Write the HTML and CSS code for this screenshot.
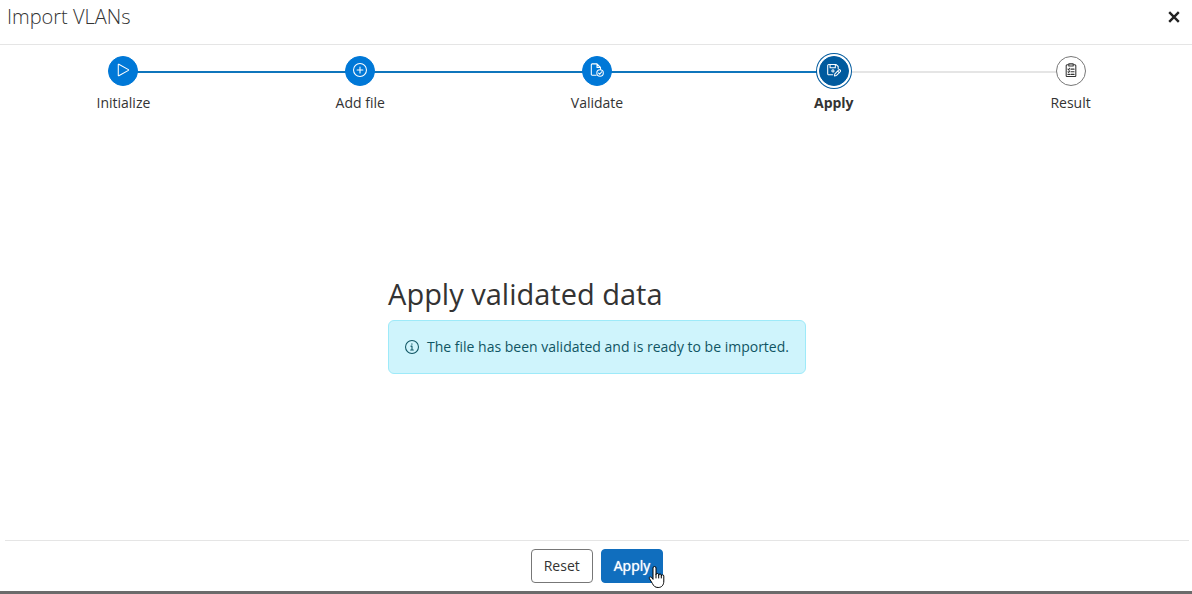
FILE: index.html
```html
<!DOCTYPE html>
<html lang="en">

<head>
    <meta charset="UTF-8">
    <meta name="viewport" content="width=device-width, initial-scale=1.0">
    <title>Import VLANs</title>
    <link rel="stylesheet" href="styles.css">
</head>

<body>
    <div class="dialog" role="dialog" aria-labelledby="dialogTitle">
        <!-- Header -->
        <header class="dialog-header">
            <h1 class="dialog-title" id="dialogTitle">Import VLANs</h1>
            <button class="btn-close" type="button" aria-label="Close">
                <svg viewBox="0 0 10 10"><path d="M1 1l8 8M9 1l-8 8"/></svg>
            </button>
        </header>

        <!-- Steps -->
        <ol class="steps">
            <li class="step done">
                <span class="step-icon">
                    <svg viewBox="0 0 16 16"><path d="M2.600 1.700v12.600a.4.4 0 0 0 .6.3l11-6.200a.5.5 0 0 0 0-.8L3.200 1.400a.4.4 0 0 0-.6.3z"/></svg>
                </span>
                <span class="step-label">Initialize</span>
            </li>
            <li class="step done">
                <span class="step-icon">
                    <svg viewBox="0 0 16 16"><circle cx="8" cy="8" r="7.400"/><path d="M8 4.700v6.600M4.700 8h6.600"/></svg>
                </span>
                <span class="step-label">Add file</span>
            </li>
            <li class="step done">
                <span class="step-icon">
                    <svg viewBox="0 0 16 16"><path d="M7 14H2.500a1 1 0 0 1-1-1V2a1 1 0 0 1 1-1H8l4 4v2M8 1v4h4"/><circle cx="11.500" cy="11.500" r="3.700"/><path d="M9.800 11.600l1.300 1.300 2.200-2.700"/></svg>
                </span>
                <span class="step-label">Validate</span>
            </li>
            <li class="step active" aria-current="step">
                <span class="step-icon">
                    <svg viewBox="0 0 16 16"><path d="M6.500 13.500H2a1.200 1.200 0 0 1-1.200-1.200V3A1.200 1.200 0 0 1 2 1.800h8.500L12.800 4v2.500M3.500 2v3.500h6V2"/><circle cx="6.800" cy="9" r="1.200"/><path d="M8.500 14.700l.5-2.400 4.200-4.200a1.200 1.200 0 0 1 1.900 1.900L10.900 14.200zM12.200 9.200l1.900 1.900"/></svg>
                </span>
                <span class="step-label">Apply</span>
            </li>
            <li class="step">
                <span class="step-icon">
                    <svg viewBox="0 0 16 16"><path d="M5 2H3.500a1 1 0 0 0-1 1v11.500a1 1 0 0 0 1 1h9a1 1 0 0 0 1-1V3a1 1 0 0 0-1-1H11"/><path d="M5.500 1h5v2.500h-5zM4.500 7l.8.8L6.500 6M8 7h3.500M4.500 10l.8.8L6.500 9M8 10h3.500M4.500 13h2M8 13h3.500"/></svg>
                </span>
                <span class="step-label">Result</span>
            </li>
        </ol>

        <!-- Content -->
        <main class="dialog-body">
            <section class="panel">
                <h2 class="panel-title">Apply validated data</h2>
                <div class="alert" role="status">
                    <svg class="alert-icon" viewBox="0 0 16 16"><circle cx="8" cy="8" r="7.400"/><path d="M6.800 7H8v4.300M6.500 11.500h3"/><path d="M7.900 4.200v.6"/></svg>
                    <span>The file has been validated and is ready to be imported.</span>
                </div>
            </section>
        </main>

        <!-- Actions -->
        <footer class="dialog-footer">
            <button class="btn btn-outline" type="button">Reset</button>
            <div class="btn-wrap">
                <button class="btn btn-primary" type="button">Apply</button>
                <svg class="pointer" viewBox="0 0 17 24"><path d="M5 14V3a1.500 1.500 0 0 1 3 0v6.500a1.400 1.400 0 0 1 2.700 0v.8a1.300 1.300 0 0 1 2.600 0v.8a1.200 1.200 0 0 1 2.500 0V16c0 4-2 6.500-5.600 6.500-3.200 0-4.500-1.500-5.800-4l-3-5c-.7-1.300.9-2.300 2-1.200zM8 9.500V13M10.700 10.300V13M13.300 11V13"/></svg>
            </div>
        </footer>
    </div>
</body>

</html>
```
FILE: styles.css
```css
/* General */
* {
    box-sizing: border-box;
}

body {
    margin: 0;
    font-family: 'Open Sans', 'Noto Sans', sans-serif;
    font-size: 14px;
    line-height: 20px;
    color: #333;
    background: #fff;
}

svg {
    display: block;
    fill: none;
    stroke: currentColor;
    stroke-linecap: round;
    stroke-linejoin: round;
}

.dialog {
    display: flex;
    flex-direction: column;
    min-height: 100vh;
    border-bottom: 3px solid #6b6b6b;
}

/* Header */
.dialog-header {
    display: flex;
    justify-content: space-between;
    align-items: center;
    padding: 4px 12px 14px 7px;
    border-bottom: 1px solid #e5e5e5;
}

.dialog-title {
    margin: 0;
    font-size: 20px;
    font-weight: 300;
    line-height: 26px;
}

.btn-close {
    padding: 0;
    border: none;
    background: none;
    color: #222;
    cursor: pointer;
}

.btn-close svg {
    width: 12px;
    height: 12px;
    stroke-width: 2;
    stroke-linecap: butt;
}

/* Steps */
.steps {
    display: flex;
    margin: 0;
    padding: 11px 3px 0 5px;
    list-style: none;
}

.step {
    position: relative;
    flex: 1;
    display: flex;
    flex-direction: column;
    align-items: center;
    gap: 7px;
}

/* line back to the previous step */
.step + .step::before {
    content: "";
    position: absolute;
    top: 15px;
    right: 50%;
    width: 100%;
    height: 2px;
    background: #e5e5e5;
}

.step + .step.done::before,
.step + .step.active::before {
    background: #0f75bc;
}

.step-icon {
    position: relative;
    z-index: 1;
    display: flex;
    justify-content: center;
    align-items: center;
    width: 30px;
    height: 30px;
    padding-bottom: 2px;
    border: 1px solid #777;
    border-radius: 50%;
    background: #fff;
}

.step-icon svg {
    width: 14px;
    height: 14px;
    stroke-width: 1.2;
}

.done .step-icon {
    border-color: #0078d7;
    background: #0078d7;
    color: #fff;
}

.active .step-icon {
    border-color: #005a9e;
    background: #005a9e;
    color: #fff;
    box-shadow: 0 0 0 2px #fff, 0 0 0 3px #005a9e;
}

.active .step-label {
    font-weight: 700;
}

/* Content */
.dialog-body {
    flex: 1;
    display: flex;
    justify-content: center;
    align-items: center;
    padding: 0 3px 3px 5px;
}

.panel-title {
    margin: 0 0 9px;
    font-size: 29px;
    font-weight: 400;
    line-height: 34px;
}

.alert {
    display: flex;
    align-items: center;
    gap: 8px;
    padding: 16px;
    border: 1px solid #9eeaf9;
    border-radius: 6px;
    background: #cff4fc;
    color: #0f5563;
}

.alert-icon {
    width: 14px;
    height: 14px;
    stroke-width: 1.2;
}

/* Actions */
.dialog-footer {
    display: flex;
    justify-content: center;
    gap: 8px;
    margin: 0 3px 0 5px;
    padding: 8px;
    border-top: 1px solid #e5e5e5;
}

.btn {
    padding: 6px 12px;
    border: 1px solid #777;
    border-radius: 4px;
    background: #fff;
    color: #333;
    font-family: inherit;
    font-size: 14px;
    line-height: 20px;
    cursor: pointer;
}

.btn-primary {
    border-color: #106ebe;
    background: #106ebe;
    color: #fff;
    text-shadow: 0 0 1px #fff;
}

.btn-wrap {
    position: relative;
}

.pointer {
    position: absolute;
    left: 47px;
    top: 16px;
    width: 17px;
    height: 24px;
    fill: #fff;
    stroke: #000;
}
```
